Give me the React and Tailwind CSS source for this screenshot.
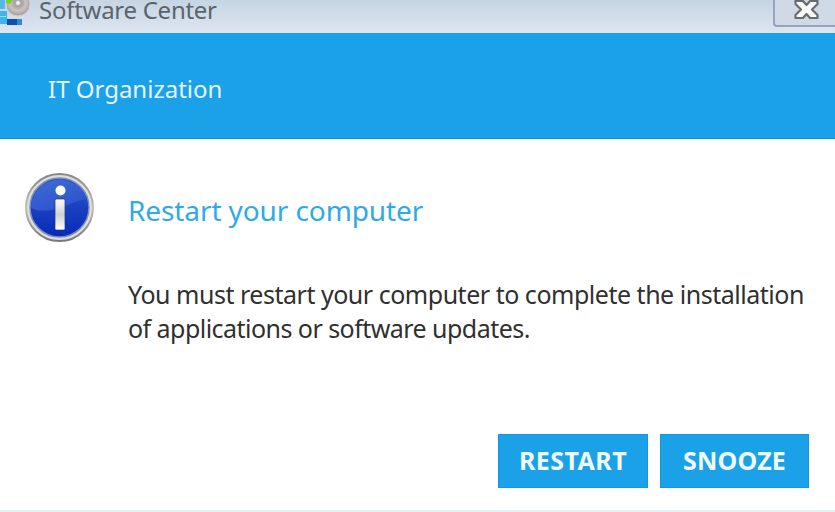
function AppIcon() {
  return (
    <svg className="block h-[30px] w-[32px] shrink-0" viewBox="0 0 32 30">
      <defs>
        <radialGradient id="disc" cx="50%" cy="45%" r="55%">
          <stop offset="0" stopColor="#f4f2f2" />
          <stop offset="0.25" stopColor="#a5a1a2" />
          <stop offset="0.6" stopColor="#c9c3c2" />
          <stop offset="1" stopColor="#a39b9c" />
        </radialGradient>
      </defs>
      <rect x="0" y="0" width="5" height="9" fill="#55b8e8" />
      <rect x="0" y="11" width="7" height="13" fill="#43b3ec" />
      <rect x="0" y="16" width="6" height="1" fill="#9cdcf7" />
      <rect x="7" y="19" width="15" height="6" fill="#0f4fae" />
      <rect x="17" y="19" width="5" height="6" fill="#3587d2" />
      <circle cx="18" cy="4" r="12" fill="url(#disc)" stroke="#d6d0d0" />
      <circle cx="18" cy="3" r="2.500" fill="#eef0f2" stroke="#b0abac" />
      <path d="M6 0h7l-3 4-4-1z" fill="#72d52e" />
    </svg>
  );
}

function CloseButton() {
  return (
    <div className="flex h-[27px] w-[62px] shrink-0 justify-start rounded-bl-[4px] border-b-2 border-l-2 border-[#98a3bd] bg-[#d0dae7] pl-[19px]">
      <svg className="block h-[20px] w-[26px]" viewBox="0 0 26 20">
        <path
          d="M1.500 1H9L12.500 5L16 1H23.500V4L18 9.500L23.500 15V18H16L12.500 14L9 18H1.500V15L7 9.500L1.500 4Z"
          fill="#fafafa"
          stroke="#696b73"
          strokeWidth="2.200"
          strokeLinejoin="round"
        />
      </svg>
    </div>
  );
}

function InfoIcon() {
  return (
    <svg className="block h-[72px] w-[72px] shrink-0" viewBox="0 0 72 72">
      <defs>
        <linearGradient id="ring" x1="0" y1="0" x2="0" y2="1">
          <stop offset="0" stopColor="#858585" />
          <stop offset="0.5" stopColor="#c2c0bd" />
          <stop offset="1" stopColor="#77777c" />
        </linearGradient>
        <linearGradient id="blue" x1="0" y1="0" x2="0" y2="1">
          <stop offset="0" stopColor="#2c58c9" />
          <stop offset="1" stopColor="#0829b7" />
        </linearGradient>
        <linearGradient id="shine" x1="0" y1="0" x2="1" y2="1">
          <stop offset="0" stopColor="#4b76db" />
          <stop offset="1" stopColor="#2b56d1" />
        </linearGradient>
        <linearGradient id="stem" x1="0" y1="0" x2="0" y2="1">
          <stop offset="0" stopColor="#ffffff" />
          <stop offset="0.5" stopColor="#cfcfcf" />
          <stop offset="1" stopColor="#ffffff" />
        </linearGradient>
      </defs>
      <circle cx="35.500" cy="35.500" r="33.500" fill="#e0deda" stroke="url(#ring)" strokeWidth="2" />
      <circle cx="35.500" cy="35.500" r="29.500" fill="url(#blue)" stroke="#7e8cb8" strokeWidth="1.500" />
      <path d="M7 35.500A28.500 28.500 0 0 1 62.500 27C50 29 39 36 27 38C19 39 12 39 7 35.500Z" fill="url(#shine)" opacity="0.7" />
      <circle cx="36.500" cy="18.500" r="5" fill="#fff" />
      <rect x="31" y="27" width="10" height="31" rx="1.500" fill="url(#stem)" stroke="#15309b" strokeWidth="0.700" />
    </svg>
  );
}

export default function App() {
  return (
    <div className="flex h-[512px] w-[835px] flex-col overflow-hidden bg-white font-['Noto_Sans','Open_Sans',sans-serif]">
      <header className="flex h-[33px] shrink-0 items-start justify-between bg-linear-to-b from-[#c6d4e3] to-[#dde6f1]">
        <div className="flex items-start">
          <AppIcon />
          <span className="ml-[7px] h-[20px] text-[24px] leading-[20px] tracking-[-0.27px] whitespace-nowrap text-[#5b646c]">Software Center</span>
        </div>
        <CloseButton />
      </header>
      <div className="h-[106px] shrink-0 border-b border-[#0795df] bg-[#1aa1e8] pt-[38px] pl-[48px]">
        <p className="text-[24px] leading-[36px] whitespace-nowrap text-[#e6f6ff]">IT Organization</p>
      </div>
      <main className="flex grow pt-[33px] pl-[24px]">
        <InfoIcon />
        <div className="ml-[32px]">
          <h1 className="mt-[18px] text-[28px] leading-[40px] tracking-[-0.1px] whitespace-nowrap text-[#2faae6]">Restart your computer</h1>
          <p className="mt-[47px] text-[25px] leading-[34px] tracking-[-0.48px] whitespace-nowrap text-[#303030]">
            <span>You must restart your computer to complete the installation</span>
            <br />
            <span className="tracking-[-0.54px]">of applications or software updates.</span>
          </p>
        </div>
      </main>
      <footer className="flex h-[78px] shrink-0 items-start justify-end gap-[12px] border-b-2 border-[#e8eff6] pr-[26px]">
        <button className="h-[54px] w-[150px] border border-[#1297df] bg-[#1aa1e8] text-[25px] font-bold tracking-[0.45px] whitespace-nowrap text-[#eefaff]"><span>RESTART</span></button>
        <button className="h-[54px] w-[149px] border border-[#1297df] bg-[#1aa1e8] text-[25px] font-bold tracking-[0.2px] whitespace-nowrap text-[#eefaff]"><span>SNOOZE</span></button>
      </footer>
    </div>
  );
}
